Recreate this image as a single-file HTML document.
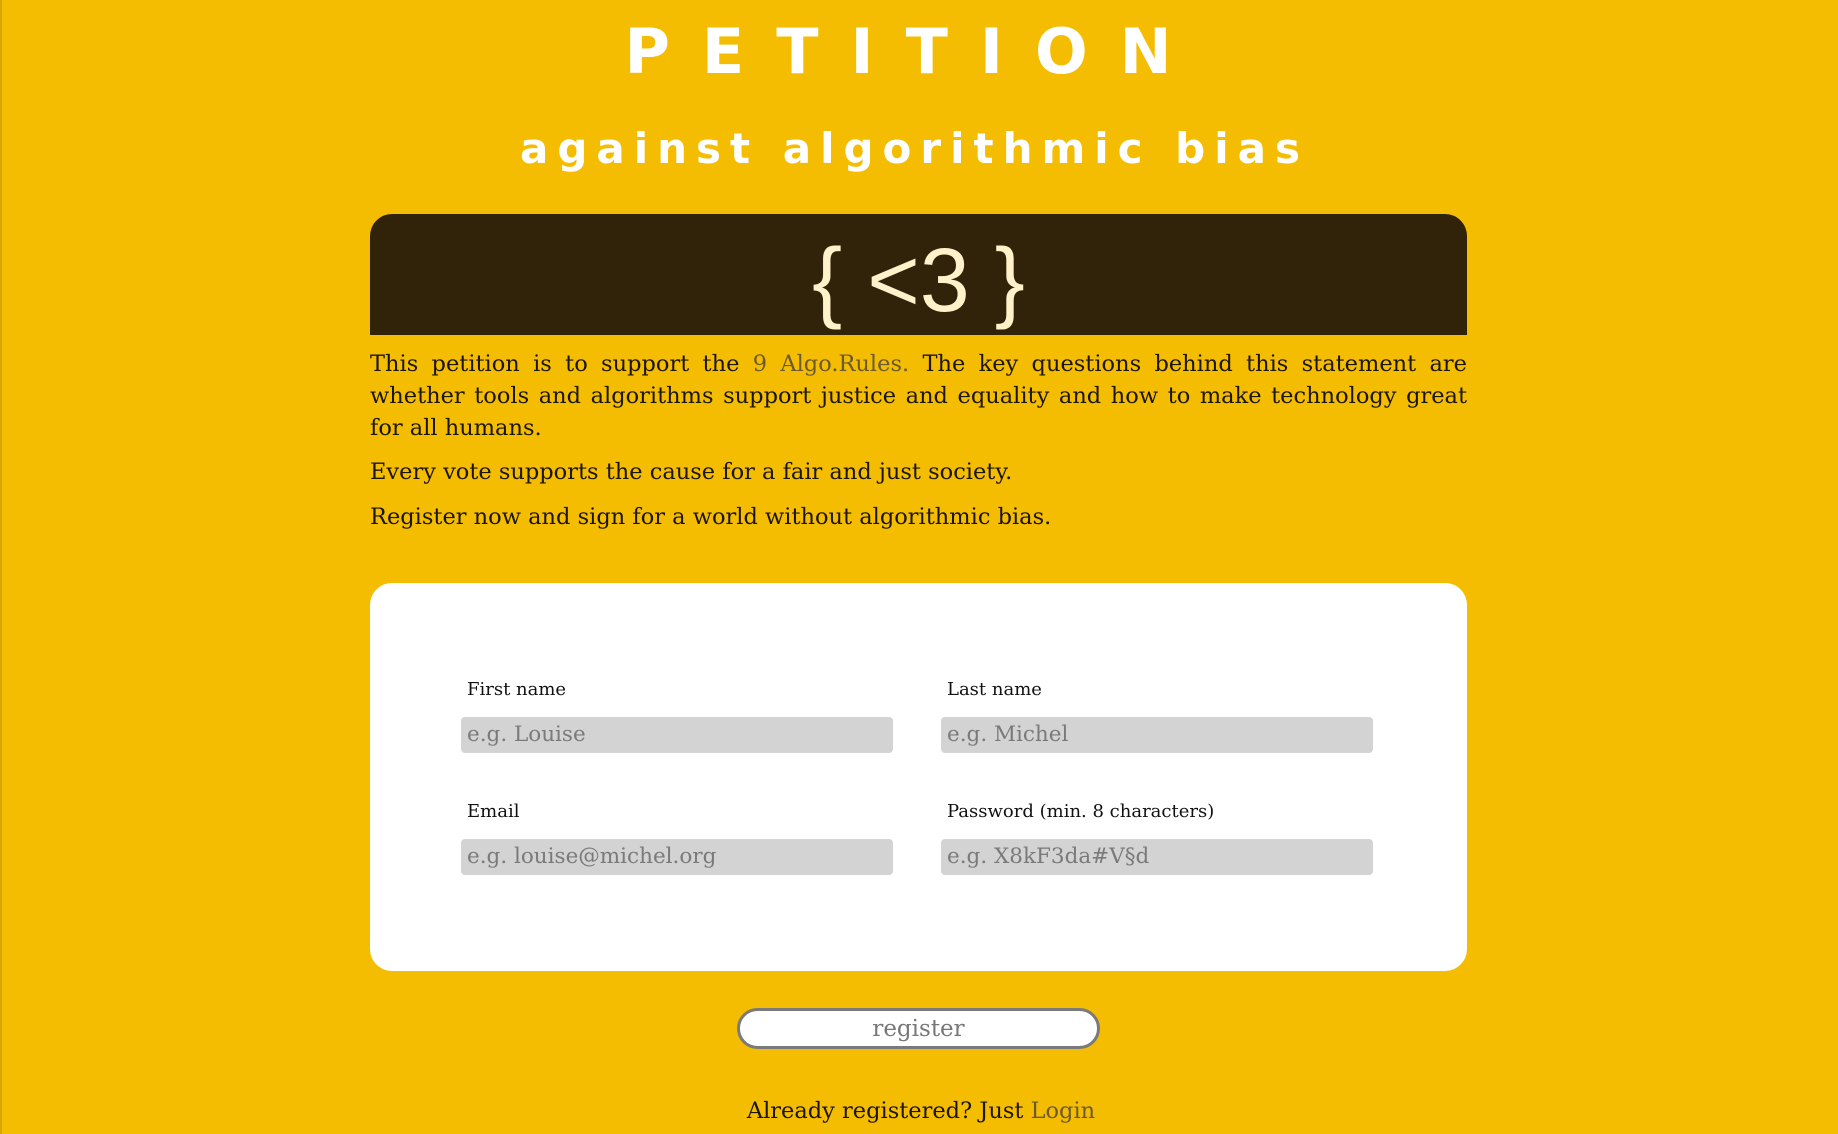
<!DOCTYPE html>
<html><head><meta charset="utf-8"><style>
html,body{margin:0;padding:0}
body{width:1838px;height:1134px;background:#f4bd02;position:relative;overflow:hidden;font-family:"DejaVu Serif",serif;color:#1c1500;border-left:2px solid #d9a600;box-sizing:border-box}
.abs{position:absolute}
h1{position:absolute;left:0;width:1838px;top:14px;margin:0;text-align:center;font:bold 62px "DejaVu Sans",sans-serif;color:#fff;letter-spacing:32px;text-indent:-14px;line-height:76px}
h2{position:absolute;left:0;width:1838px;top:119px;margin:0;text-align:center;font:bold 42px "DejaVu Sans",sans-serif;color:#fff;letter-spacing:9px;text-indent:-13px;line-height:60px}
.dark{left:368px;top:214px;width:1097px;height:121px;background:#30230a;border-radius:22px 22px 0 0;text-align:center;color:#fff1c9;font:90px "Liberation Sans",sans-serif;line-height:134px}
.txt{left:368px;width:1097px;font-size:22.5px;line-height:32px;text-align:justify}
.txt a{color:#6b5a2e;text-decoration:none}
.card{left:368px;top:583px;width:1097px;height:388px;background:#fff;border-radius:22px}
.lbl{font-size:18px;color:#111}
.inp{background:#d3d3d3;border-radius:4px;height:36px;width:432px;font-size:21.5px;color:#7a7a7a;line-height:36px;padding-left:6px;box-sizing:border-box}
.btn{left:735px;top:1008px;width:363px;height:41px;border:3px solid #7a7a7a;border-radius:22px;background:#fff;box-sizing:border-box;text-align:center;font-size:23px;color:#777;line-height:36px}
</style></head><body>
<h1>PETITION</h1>
<h2>against algorithmic bias</h2>
<div class="abs dark">{ &lt;3 }</div>
<div class="abs txt" style="top:348px">This petition is to support the <a>9 Algo.Rules.</a> The key questions behind this statement are whether tools and algorithms support justice and equality and how to make technology great for all humans.</div>
<div class="abs txt" style="top:456px">Every vote supports the cause for a fair and just society.</div>
<div class="abs txt" style="top:501px">Register now and sign for a world without algorithmic bias.</div>
<div class="abs card"></div>
<div class="abs lbl" style="left:465px;top:679px">First name</div>
<div class="abs lbl" style="left:945px;top:679px">Last name</div>
<div class="abs inp" style="left:459px;top:717px">e.g. Louise</div>
<div class="abs inp" style="left:939px;top:717px">e.g. Michel</div>
<div class="abs lbl" style="left:465px;top:801px">Email</div>
<div class="abs lbl" style="left:945px;top:801px">Password (min. 8 characters)</div>
<div class="abs inp" style="left:459px;top:839px">e.g. louise@michel.org</div>
<div class="abs inp" style="left:939px;top:839px">e.g. X8kF3da#V§d</div>
<div class="abs btn">register</div>
<div class="abs" style="left:0;width:1838px;top:1098px;text-align:center;font-size:22.5px">Already registered? Just <span style="color:#6b5a2e">Login</span></div>
</body></html>
